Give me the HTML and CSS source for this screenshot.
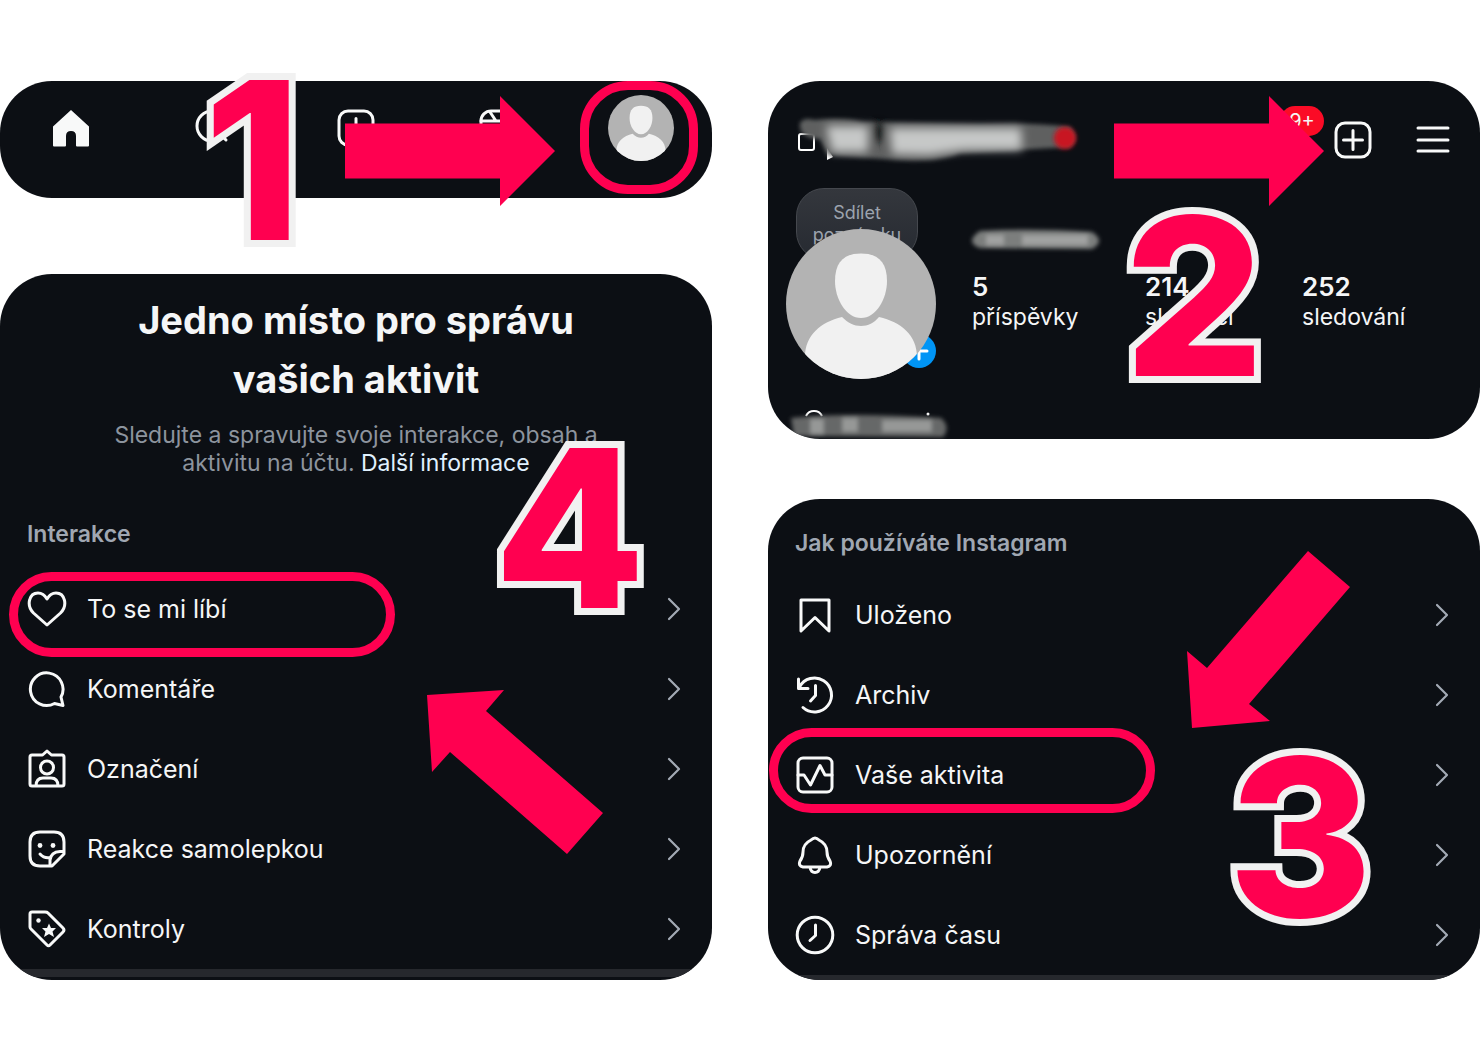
FILE: index.html
```html
<!DOCTYPE html>
<html lang="cs">
<head>
    <meta charset="UTF-8">
    <meta name="viewport" content="width=device-width, initial-scale=1.0">
    <title>Instagram – To se mi líbí</title>
    <link rel="stylesheet" href="styles.css">
</head>
<body>
    <!-- shared shapes -->
    <svg class="defs" width="0" height="0" aria-hidden="true">
        <symbol id="avatar" viewBox="0 0 150 150">
            <clipPath id="round"><circle cx="75" cy="75" r="75"/></clipPath>
            <g clip-path="url(#round)">
                <rect width="150" height="150" fill="#b3b3b3"/>
                <path fill="#f1f1f1" d="M75 24.5C92 24.5 101 33 101 52C101 70 90 89 75 89S49 70 49 52C49 33 58 24.5 75 24.5Z"/>
                <path fill="#f1f1f1" d="M56 88C62 94 68 97 75 97S88 94 93 88C115 93 131 106 131 128V150H19V128C19 106 35 93 56 88Z"/>
            </g>
        </symbol>
        <symbol id="chevron" viewBox="0 0 14 24">
            <path d="M2 2L12 12L2 22" fill="none" stroke="#a3aab5" stroke-width="2.2" stroke-linecap="round" stroke-linejoin="round"/>
        </symbol>
        <symbol id="plus-box" viewBox="0 0 38 38">
            <rect x="2" y="2" width="34" height="34" rx="9"/>
            <path d="M19 9.500V28.500M9.500 19H28.500"/>
        </symbol>
        <symbol id="arrow" viewBox="0 0 210 110">
            <path fill="#ff0050" d="M0 27.500H155V0L210 55L155 110V82.500H0Z"/>
        </symbol>
    </svg>

    <main class="board">
        <div class="column column-left">
            <section class="step">
                <nav class="card tabbar">
                    <a href="#" aria-label="Domů">
                        <svg width="38" height="38" viewBox="0 0 38 38"><path fill="#f8f9f9" d="M19 1L37 17.500V36.500Q37 37.500 36 37.500H25Q24 37.500 24 36.500V27Q24 22 19 22T14 27V36.500Q14 37.500 13 37.500H2Q1 37.500 1 36.500V17.500Z"/></svg>
                    </a>
                    <a href="#" aria-label="Hledat">
                        <svg class="line" width="38" height="38" viewBox="0 0 38 38"><circle cx="17" cy="17" r="15"/><path d="M28 28L31 31"/></svg>
                    </a>
                    <a href="#" aria-label="Vytvořit"><svg class="line" width="38" height="38"><use href="#plus-box"/></svg></a>
                    <a href="#" aria-label="Reels">
                        <svg class="line" width="38" height="38" viewBox="0 0 38 38"><rect x="2" y="2" width="34" height="34" rx="10"/><path d="M2 12H36M11 3L17 12M22 2L28 12M15 18V30L26 24Z"/></svg>
                    </a>
                    <a href="#" aria-label="Profil"><svg width="66" height="66"><use href="#avatar"/></svg></a>
                </nav>
                <span class="number number-1">1</span>
                <svg class="arrow arrow-1" width="210" height="110"><use href="#arrow"/></svg>
                <span class="ring ring-profile"></span>
            </section>

            <section class="step">
                <div class="card activity">
                    <h1>Jedno místo pro správu<br>vašich aktivit</h1>
                    <p>Sledujte a spravujte svoje interakce, obsah a<br>aktivitu na účtu. <a href="#">Další informace</a></p>
                    <h2>Interakce</h2>
                    <ul class="rows">
                        <li><a href="#">
                            <svg class="line" width="40" height="40" viewBox="0 0 40 40"><path d="M20 36L6.500 24C-1 16.500 2 4 11 4C15.500 4 18 6.500 20 10C22 6.500 24.500 4 29 4C38 4 41 16.500 33.500 24Z"/></svg>
                            <span>To se mi líbí</span><svg class="chevron" width="14" height="24"><use href="#chevron"/></svg></a></li>
                        <li><a href="#">
                            <svg class="line" width="40" height="40" viewBox="0 0 40 40"><path d="M34 28A16.300 16.300 0 1 0 27.500 34.500L36 36.500Z"/></svg>
                            <span>Komentáře</span><svg class="chevron" width="14" height="24"><use href="#chevron"/></svg></a></li>
                        <li><a href="#">
                            <svg class="line" width="40" height="40" viewBox="0 0 40 40"><path d="M5 6H15.500L20 2L24.500 6H35Q37 6 37 8V35Q37 37 35 37H5Q3 37 3 35V8Q3 6 5 6ZM9 37C9 31 12 29 16 29H24C28 29 31 31 31 37"/><circle cx="20" cy="18.500" r="6.500"/></svg>
                            <span>Označení</span><svg class="chevron" width="14" height="24"><use href="#chevron"/></svg></a></li>
                        <li><a href="#">
                            <svg class="line" width="40" height="40" viewBox="0 0 40 40"><path d="M25 37H13Q3 37 3 27V13Q3 3 13 3H27Q37 3 37 13V25ZM23 37V31Q24 23 33 22.500H37M13 25Q17 29.500 23 28.500"/><circle class="dot" cx="13" cy="16.500" r="2.400"/><circle class="dot" cx="26" cy="16.500" r="2.400"/></svg>
                            <span>Reakce samolepkou</span><svg class="chevron" width="14" height="24"><use href="#chevron"/></svg></a></li>
                        <li><a href="#">
                            <svg class="line" width="40" height="40" viewBox="0 0 40 40"><path d="M5 3H18Q20 3 21 4L36 19Q38 21 36 23L23 36Q21.500 37.500 20 36L4 20Q3 19 3 18V5Q3 3 5 3Z"/><circle class="dot" cx="11.500" cy="11.500" r="2.200"/><path class="dot" d="M22 14.500L24 19H29L25.500 22.500L27 28L22 25L17 28L18.500 22.500L15 19H20Z"/></svg>
                            <span>Kontroly</span><svg class="chevron" width="14" height="24"><use href="#chevron"/></svg></a></li>
                    </ul>
                    <div class="divider"></div>
                </div>
                <span class="ring ring-likes"></span>
                <span class="number number-4">4</span>
                <svg class="arrow arrow-4" width="176" height="164" viewBox="0 0 176 164"><path fill="#ff0050" d="M0 5L77 0L59 21L176 123L140 164L23 62L5 82Z"/></svg>
            </section>
        </div>

        <div class="column column-right">
            <section class="step">
                <div class="card profile">
                    <header class="profile-bar">
                        <svg class="smudge" width="296" height="60" viewBox="0 0 296 60">
                            <defs>
                                <filter id="soft" x="-20%" y="-50%" width="140%" height="200%"><feGaussianBlur stdDeviation="2"/></filter>
                                <filter id="softer" x="-20%" y="-50%" width="140%" height="200%"><feGaussianBlur stdDeviation="5"/></filter>
                            </defs>
                            <rect x="5" y="24" width="15" height="16" rx="2" fill="none" stroke="#fff" stroke-width="2"/>
                            <path fill="#fff" d="M33 38V50L39 47Z"/>
                            <path filter="url(#soft)" fill="#5e6060" d="M6 13Q10 7 20 10Q50 7 68 12L185 14Q240 12 276 17Q285 28 276 37L240 39L165 43Q145 53 90 49L34 45L26 29Q4 28 6 13Z"/>
                            <g filter="url(#softer)">
                                <path fill="#c6c8c7" d="M32 16H74V42L38 42ZM96 18H227L228 40H170L135 45L98 44Z"/>
                                <path fill="#101316" d="M79 12H90V32H79Z"/>
                            </g>
                            <circle filter="url(#soft)" cx="271" cy="28" r="11" fill="#c81420"/>
                        </svg>
                        <button class="inbox" type="button" aria-label="Aktivita"><span class="count">9+</span></button>
                        <button type="button" aria-label="Vytvořit"><svg class="line" width="38" height="38"><use href="#plus-box"/></svg></button>
                        <button type="button" aria-label="Nabídka"><svg class="line" width="34" height="38" viewBox="0 0 34 38"><path d="M2 7H32M2 19H32M2 30H32"/></svg></button>
                    </header>
                    <div class="profile-info">
                        <div class="photo">
                            <div class="note">Sdílet<br>poznámku</div>
                            <svg class="add" width="34" height="34" viewBox="0 0 34 34"><circle cx="17" cy="17" r="17" fill="#0095f6"/><path d="M17 9V25M9 17H25" stroke="#fff" stroke-width="3" stroke-linecap="round"/></svg>
                            <svg class="face" width="150" height="150"><use href="#avatar"/></svg>
                        </div>
                        <div class="details">
                            <svg class="smudge" width="134" height="30" viewBox="0 0 134 30">
                                <path filter="url(#soft)" fill="#7c7e7d" d="M8 2Q60 -1 120 3Q134 12 120 20L8 19Q-8 13 8 2Z"/>
                                <g filter="url(#soft)"><path fill="#a0a2a1" d="M14 6H32V16H14ZM50 6H116V16H50Z"/></g>
                            </svg>
                            <dl class="stats">
                                <div><dd>5</dd><dt>příspěvky</dt></div>
                                <div><dd>214</dd><dt>sledující</dt></div>
                                <div><dd>252</dd><dt>sledování</dt></div>
                            </dl>
                        </div>
                    </div>
                    <svg class="smudge handle" width="170" height="34" viewBox="0 0 170 34">
                        <path d="M20 11A9 9 0 0 1 36 11" fill="none" stroke="#fff" stroke-width="2"/><circle cx="142" cy="9" r="1.500" fill="#fff"/>
                        <path filter="url(#soft)" fill="#666867" d="M5 13Q60 7 155 13Q165 22 157 32L8 31Z"/>
                        <g filter="url(#soft)"><path fill="#969897" d="M24 14H38V29H24ZM56 13H72V27H56ZM96 15H146V27H96Z"/></g>
                    </svg>
                </div>
                <svg class="arrow arrow-2" width="210" height="110"><use href="#arrow"/></svg>
                <span class="number number-2">2</span>
            </section>

            <section class="step">
                <div class="card usage">
                    <h2>Jak používáte Instagram</h2>
                    <ul class="rows">
                        <li><a href="#">
                            <svg class="line" width="40" height="40" viewBox="0 0 40 40"><path d="M6 5H34V36L20 22.500L6 36Z"/></svg>
                            <span>Uloženo</span><svg class="chevron" width="14" height="24"><use href="#chevron"/></svg></a></li>
                        <li><a href="#">
                            <svg class="line" width="40" height="40" viewBox="0 0 40 40"><path d="M3.500 4V13.500H13M4.500 12A17 17 0 1 1 8 32.500M20.500 10.500V20.500L15.500 26"/></svg>
                            <span>Archiv</span><svg class="chevron" width="14" height="24"><use href="#chevron"/></svg></a></li>
                        <li><a href="#">
                            <svg class="line" width="40" height="40" viewBox="0 0 40 40"><rect x="3" y="3" width="34" height="34" rx="5"/><path d="M3 20H9L15.500 30L25 10.500L30 20H37"/></svg>
                            <span>Vaše aktivita</span><svg class="chevron" width="14" height="24"><use href="#chevron"/></svg></a></li>
                        <li><a href="#">
                            <svg class="line" width="40" height="40" viewBox="0 0 40 40"><path d="M8 32Q3 31 5 26Q8 22 8 17C8 11 12 7 16 5Q20 1 24 5C28 7 32 11 32 17Q32 22 35 26Q37 31 32 32ZM15 32.500Q16 37.500 20 37.500T25 32.500"/></svg>
                            <span>Upozornění</span><svg class="chevron" width="14" height="24"><use href="#chevron"/></svg></a></li>
                        <li><a href="#">
                            <svg class="line" width="40" height="40" viewBox="0 0 40 40"><circle cx="20" cy="20" r="17.800"/><path d="M20.500 10V20.500L15 25.500"/></svg>
                            <span>Správa času</span><svg class="chevron" width="14" height="24"><use href="#chevron"/></svg></a></li>
                    </ul>
                    <div class="divider"></div>
                </div>
                <span class="ring ring-activity"></span>
                <svg class="arrow arrow-3" width="163" height="177" viewBox="0 0 163 177"><path fill="#ff0050" d="M5 177L0 100L20 117L121 0L163 36L62 153L83 170Z"/></svg>
                <span class="number number-3">3</span>
            </section>
        </div>
    </main>
</body>
</html>
```
FILE: styles.css
```css
* {
    box-sizing: border-box;
}

body {
    margin: 0;
    background-color: #fff;
    color: #f5f6f7;
    font-family: Inter, "Liberation Sans", sans-serif;
}

h1, h2, p, ul, dl, dd {
    margin: 0;
    padding: 0;
}

a {
    color: inherit;
    text-decoration: none;
}

button {
    padding: 0;
    border: none;
    background: none;
    color: inherit;
    font: inherit;
    cursor: pointer;
}

svg {
    display: block;
    flex-shrink: 0;
}

.defs {
    position: absolute;
}

.line {
    fill: none;
    stroke: #f8f9f9;
    stroke-width: 3;
    stroke-linecap: round;
    stroke-linejoin: round;
}

.line .dot {
    fill: #f8f9f9;
    stroke: none;
}

/* layout */
.board {
    display: grid;
    grid-template-columns: 1fr 1fr;
    gap: 56px;
    align-items: start;
    padding: 81px 2px 74px 0;
}

.column {
    display: flex;
    flex-direction: column;
}

.column-left {
    gap: 76px;
}

.column-right {
    gap: 60px;
}

.step {
    position: relative;
}

.card {
    overflow: hidden;
    border-radius: 52px;
    background-color: #0c0f14;
}

/* bottom tab bar */
.tabbar {
    display: grid;
    grid-template-columns: repeat(5, 1fr);
    align-items: center;
    justify-items: center;
    padding: 14px 0 37px;
}

/* lists */
.card h2 {
    padding: 0 27px;
    color: #a0a7b2;
    font-size: 23px;
    font-weight: 600;
    line-height: 28px;
}

.rows {
    list-style: none;
}

.rows a {
    display: flex;
    align-items: center;
    gap: 20px;
    height: 80px;
    padding: 0 31px 0 27px;
    font-size: 25px;
}

.chevron {
    margin-left: auto;
}

.divider {
    height: 8px;
    background-color: #26282d;
}

.activity {
    padding: 17px 0 3px;
}

.activity h1 {
    font-size: 38px;
    font-weight: 700;
    line-height: 59px;
    text-align: center;
}

.activity p {
    margin: 12px 0 43px;
    color: #8d949e;
    font-size: 23px;
    line-height: 28px;
    text-align: center;
}

.activity p a {
    color: #e0f1ff;
}

.activity .rows {
    margin-top: 21px;
}

.usage {
    padding-top: 30px;
}

.usage .rows {
    margin-top: 18px;
}

.usage .divider {
    height: 5px;
}

/* profile */
.profile {
    padding: 29px 0 0 18px;
}

.profile-bar {
    display: flex;
    align-items: center;
    gap: 44px;
    height: 60px;
    padding: 0 30px 0 8px;
}

.inbox {
    position: relative;
    width: 38px;
    height: 38px;
    margin-left: auto;
}

.count {
    position: absolute;
    top: -15px;
    right: -34px;
    width: 44px;
    border-radius: 15px;
    background-color: #fb0b26;
    font-size: 20px;
    line-height: 30px;
}

.profile-info {
    display: flex;
    gap: 36px;
    margin-top: 59px;
}

.photo {
    position: relative;
}

.face {
    position: relative;
}

.note {
    position: absolute;
    top: -41px;
    left: 10px;
    width: 122px;
    height: 72px;
    padding-top: 13px;
    border: 1px solid #45484e;
    border-radius: 28px;
    background: linear-gradient(#34373d, #262a31);
    color: #9ca3ae;
    font-size: 18px;
    line-height: 22px;
    text-align: center;
}

.add {
    position: absolute;
    right: 0;
    bottom: 11px;
}

.smudge {
    overflow: visible;
}

.details {
    flex-grow: 1;
}

.stats {
    display: grid;
    grid-template-columns: 173px 157px 1fr;
    margin-top: 13px;
}

.stats div {
    display: flex;
    flex-direction: column;
    line-height: 30px;
}

.stats dd {
    font-size: 26px;
    font-weight: 600;
}

.stats dt {
    font-size: 23px;
}

.handle {
    margin-top: 26px;
}

/* marks drawn over the cards */
.number {
    position: absolute;
    color: #ff0050;
    font-size: 220px;
    font-weight: 800;
    line-height: 220px;
    -webkit-text-stroke: 14px #f1f1f1;
    paint-order: stroke fill;
}

.number-1 {
    top: -31px;
    left: 204px;
}

.number-2 {
    top: 105px;
    left: 356px;
}

.number-3 {
    top: 228px;
    left: 460px;
}

.number-4 {
    top: 144px;
    left: 494px;
}

.arrow {
    position: absolute;
}

.arrow-1 {
    top: 15px;
    left: 345px;
}

.arrow-2 {
    top: 15px;
    left: 346px;
}

.arrow-3 {
    top: 52px;
    left: 419px;
}

.arrow-4 {
    top: 416px;
    left: 427px;
}

.ring {
    position: absolute;
    width: 386px;
    height: 85px;
    border: 9px solid #ff0050;
    border-radius: 43px;
}

.ring-profile {
    top: 0;
    right: 14px;
    width: 118px;
    height: 113px;
    border-radius: 48px;
}

.ring-likes {
    top: 298px;
    left: 9px;
}

.ring-activity {
    top: 229px;
    left: 1px;
}
```
